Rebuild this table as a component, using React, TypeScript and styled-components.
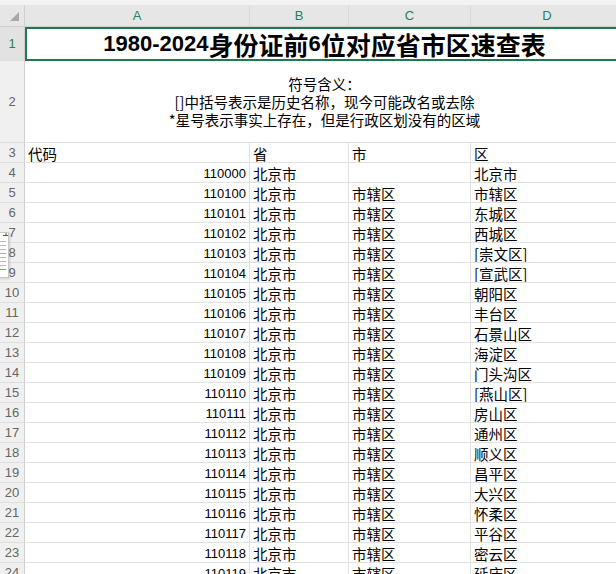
import React from 'react';
import styled, { createGlobalStyle } from 'styled-components';

const Global = createGlobalStyle`
  html, body { margin: 0; padding: 0; background: #fff; overflow: hidden; }
  #root { width: 616px; height: 574px; }
`;

const Page = styled.div`
  position: relative;
  width: 616px;
  height: 574px;
  overflow: hidden;
  background: #fff;
`;

const TopStrip = styled.div`
  height: 5px;
  background: #f3f3f3;
`;

const Sheet = styled.div`
  display: grid;
  grid-template-columns: 25px 225px 99px 122px 153px;
  grid-template-rows: 22px 34px 82px;
  grid-auto-rows: 20px;
  width: 624px;
`;

const Corner = styled.div`
  background: #e6e6e6;
  border-right: 1px solid #d0d0d0;
  border-bottom: 1px solid #cfcfcf;
  display: flex;
  align-items: flex-end;
  justify-content: flex-end;
  padding: 0 5px 5px 0;
  box-sizing: border-box;
`;

const ColHead = styled.div`
  background: #e6e6e6;
  border-bottom: 1px solid #cfcfcf;
  border-right: 1px solid #dadada;
  color: #2e7d57;
  font: 13px 'Liberation Sans', Arial, sans-serif;
  display: flex;
  align-items: center;
  justify-content: center;
  box-sizing: border-box;
`;

const RowHead = styled.div<{ $selected?: boolean }>`
  background: ${(p) => (p.$selected ? '#e2e2e2' : '#f0f0f0')};
  color: ${(p) => (p.$selected ? '#2e7d57' : '#666')};
  border-right: 1px solid #cfcfcf;
  border-bottom: 1px solid #dedede;
  font: 13px 'Liberation Sans', Arial, sans-serif;
  display: flex;
  align-items: center;
  justify-content: center;
  box-sizing: border-box;
`;

const Cell = styled.div<{ $align?: 'left' | 'right'; $num?: boolean }>`
  border-right: 1px solid #e1e1e1;
  border-bottom: 1px solid #e1e1e1;
  box-sizing: border-box;
  display: flex;
  align-items: center;
  justify-content: ${(p) => (p.$align === 'right' ? 'flex-end' : 'flex-start')};
  padding: 1px 3px 0 3px;
  white-space: nowrap;
  overflow: hidden;
  color: #000;
  font-family: ${(p) =>
    p.$num
      ? "'Liberation Sans', Arial, sans-serif"
      : "'Noto Sans CJK SC', 'Noto Sans', sans-serif"};
  font-size: ${(p) => (p.$num ? '13px' : '14.5px')};
  line-height: 19px;
`;

const TitleCell = styled.div`
  grid-column: 2 / 6;
  position: relative;
  z-index: 2;
  box-sizing: border-box;
  outline: 2px solid #1f7a50;
  outline-offset: -2px;
  border-bottom: 1px solid #e1e1e1;
  display: flex;
  align-items: center;
  justify-content: center;
  color: #000;
  font-family: 'Noto Sans CJK SC', sans-serif;
  font-weight: 700;
  font-size: 25px;
  line-height: 30px;
  white-space: nowrap;
  padding-top: 1px;
`;

const TitleNum = styled.span`
  font-family: 'Liberation Sans', Arial, sans-serif;
  font-weight: 700;
  font-size: 22px;
`;

const NoteCell = styled.div`
  grid-column: 2 / 6;
  box-sizing: border-box;
  border-bottom: 1px solid #e1e1e1;
  display: flex;
  flex-direction: column;
  align-items: center;
  justify-content: center;
  font-family: 'Noto Sans CJK SC', sans-serif;
  font-size: 14.5px;
  line-height: 18px;
  color: #000;
  white-space: nowrap;
`;

const NoteLine = styled.div`
  height: 18px;
  overflow: visible;
`;

const Widget = styled.div`
  position: absolute;
  left: -4px;
  top: 232px;
  width: 13px;
  height: 46px;
  background: #fff;
  border: 1px solid #c8c8c8;
  box-sizing: border-box;
  box-shadow: 1px 1px 2px rgba(0, 0, 0, 0.15);
  z-index: 5;
`;

type Row = [string, string, string, string];

const rows: Row[] = [
  ['110000', '北京市', '', '北京市'],
  ['110100', '北京市', '市辖区', '市辖区'],
  ['110101', '北京市', '市辖区', '东城区'],
  ['110102', '北京市', '市辖区', '西城区'],
  ['110103', '北京市', '市辖区', '[崇文区]'],
  ['110104', '北京市', '市辖区', '[宣武区]'],
  ['110105', '北京市', '市辖区', '朝阳区'],
  ['110106', '北京市', '市辖区', '丰台区'],
  ['110107', '北京市', '市辖区', '石景山区'],
  ['110108', '北京市', '市辖区', '海淀区'],
  ['110109', '北京市', '市辖区', '门头沟区'],
  ['110110', '北京市', '市辖区', '[燕山区]'],
  ['110111', '北京市', '市辖区', '房山区'],
  ['110112', '北京市', '市辖区', '通州区'],
  ['110113', '北京市', '市辖区', '顺义区'],
  ['110114', '北京市', '市辖区', '昌平区'],
  ['110115', '北京市', '市辖区', '大兴区'],
  ['110116', '北京市', '市辖区', '怀柔区'],
  ['110117', '北京市', '市辖区', '平谷区'],
  ['110118', '北京市', '市辖区', '密云区'],
  ['110119', '北京市', '市辖区', '延庆区'],
];

export default function App() {
  return (
    <Page>
      <Global />
      <TopStrip />
      <Sheet>
        <Corner>
          <svg width="9" height="9" viewBox="0 0 9 9">
            <polygon points="9,0 9,9 0,9" fill="#a8a8a8" />
          </svg>
        </Corner>
        {['A', 'B', 'C', 'D'].map((c) => (
          <ColHead key={c}>{c}</ColHead>
        ))}

        <RowHead $selected>1</RowHead>
        <TitleCell>
          <TitleNum>1980-2024</TitleNum>身份证前<TitleNum>6</TitleNum>位对应省市区速查表
        </TitleCell>

        <RowHead>2</RowHead>
        <NoteCell>
          <NoteLine>符号含义：</NoteLine>
          <NoteLine>[]中括号表示是历史名称，现今可能改名或去除</NoteLine>
          <NoteLine>*星号表示事实上存在，但是行政区划没有的区域</NoteLine>
        </NoteCell>

        <RowHead>3</RowHead>
        <Cell>代码</Cell>
        <Cell>省</Cell>
        <Cell>市</Cell>
        <Cell>区</Cell>

        {rows.map((r, i) => (
          <React.Fragment key={r[0]}>
            <RowHead>{i + 4}</RowHead>
            <Cell $align="right" $num>
              {r[0]}
            </Cell>
            <Cell>{r[1]}</Cell>
            <Cell>{r[2]}</Cell>
            <Cell>{r[3]}</Cell>
          </React.Fragment>
        ))}
      </Sheet>
      <Widget>
        <svg width="11" height="44" viewBox="0 0 11 44">
          <line x1="9" y1="0" x2="9" y2="3" stroke="#555" strokeWidth="1" />
          <line x1="6" y1="2.5" x2="11" y2="2.5" stroke="#555" strokeWidth="1" />
          {[8, 12, 16, 20, 24, 28, 32, 36].map((y, k) => (
            <line
              key={y}
              x1="3"
              y1={y + 0.5}
              x2="9"
              y2={y + 0.5}
              stroke={k === 3 ? '#e0a060' : k === 7 ? '#7aa860' : '#b8b8b8'}
              strokeWidth="1"
            />
          ))}
        </svg>
      </Widget>
    </Page>
  );
}
